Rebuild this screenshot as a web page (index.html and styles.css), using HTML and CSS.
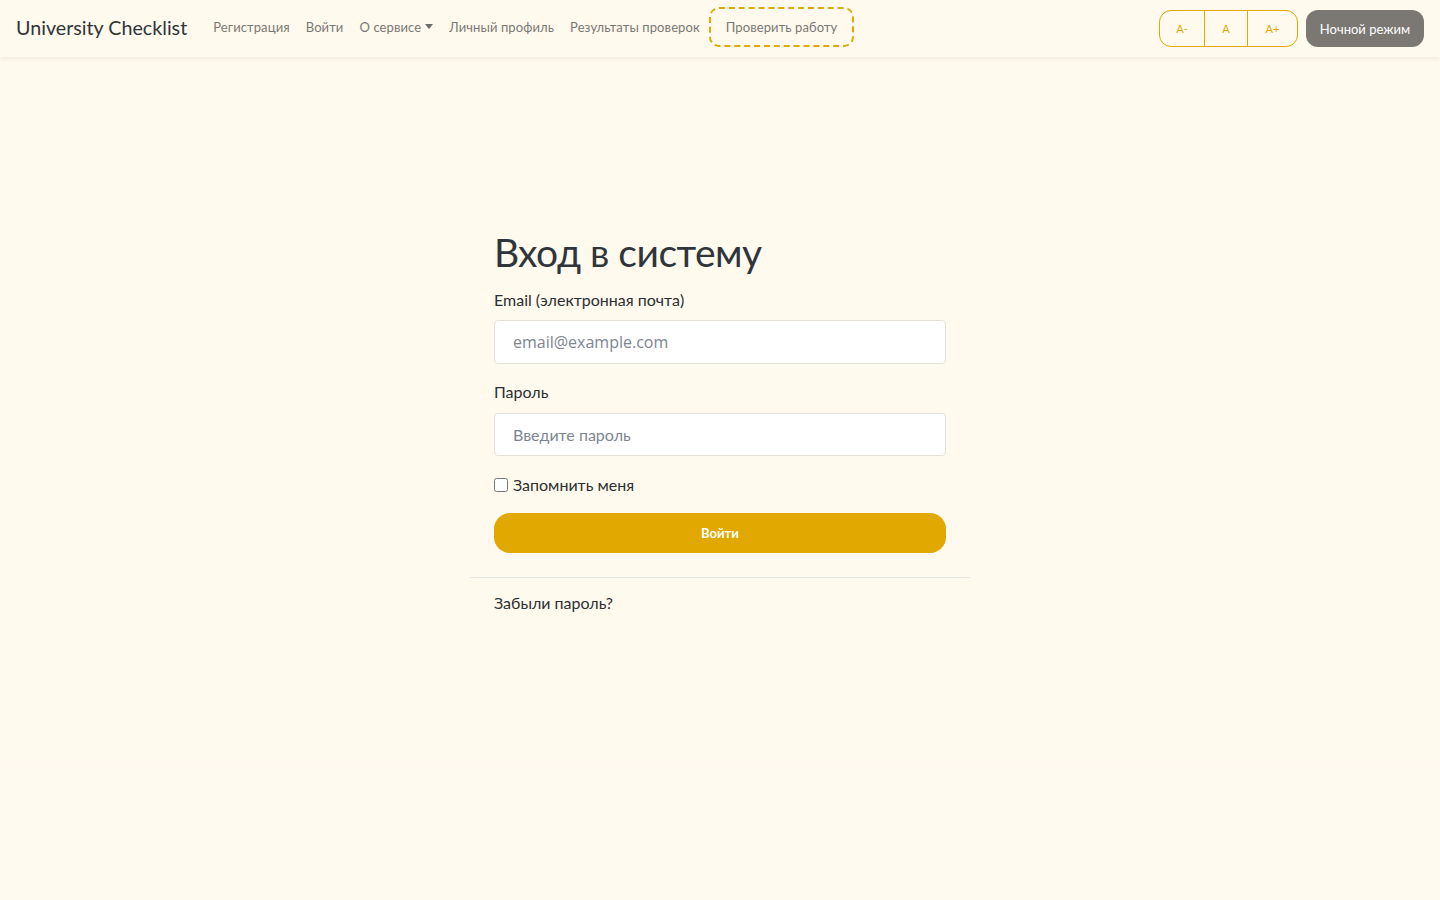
FILE: index.html
```html
<!DOCTYPE html>
<html lang="ru">
<head>
<meta charset="utf-8">
<title>University Checklist</title>
<link rel="stylesheet" href="styles.css">
</head>
<body>
<div class="page">
<header class="navbar">
  <a class="brand" href="#">University Checklist</a>
  <nav class="nav">
    <a href="#">Регистрация</a>
    <a href="#">Войти</a>
    <a href="#" class="dropdown">О сервисе<span class="caret"></span></a>
    <a href="#">Личный профиль</a>
    <a href="#">Результаты проверок</a>
    <a href="#" class="check-btn">Проверить работу</a>
  </nav>
  <div class="tools">
    <div class="size-group">
      <button class="sz sz1">A-</button>
      <button class="sz sz2">A</button>
      <button class="sz sz3">A+</button>
    </div>
    <button class="night">Ночной режим</button>
  </div>
</header>
<main class="main">
  <section class="login">
    <div class="login-body">
      <h1 class="title">Вход в систему</h1>
      <label class="label" for="email">Email (электронная почта)</label>
      <input class="input email" id="email" type="email" placeholder="email@example.com">
      <label class="label" for="pw">Пароль</label>
      <input class="input pw" id="pw" type="password" placeholder="Введите пароль">
      <label class="remember"><input type="checkbox" class="check"><span>Запомнить меня</span></label>
      <button class="submit">Войти</button>
    </div>
    <hr class="sep">
    <div class="login-foot"><a href="#">Забыли пароль?</a></div>
  </section>
</main>
</div>
</body>
</html>
```
FILE: styles.css
```css
html {
  background: #fffaf0;
}
body {
  margin: 0;
  font-family: "Lato", "Noto Sans", sans-serif;
  color: #2b2f33;
}
.page {
  background: #fffaed;
  min-height: 762px;
}
a { text-decoration: none; color: inherit; }

.navbar {
  height: 57px;
  display: flex;
  align-items: center;
  padding: 0 16px 3px;
  box-sizing: border-box;
  background: #fffaed;
  box-shadow: 0 2px 4px rgba(0,0,0,0.06);
}
.brand {
  font-size: 19.7px;
  color: #2f343a;
  margin-right: 18px;
}
.nav {
  display: flex;
  align-items: center;
}
.nav a {
  font-size: 13px;
  letter-spacing: 0.1px;
  color: #7a7874;
  padding: 8px 8px;
}
.caret {
  display: inline-block;
  margin-left: 4px;
  vertical-align: 3px;
  border-top: 5px solid #6d6b68;
  border-left: 4px solid transparent;
  border-right: 4px solid transparent;
}
.nav a.check-btn {
  margin-left: 1px;
  border: 2px dashed #e0a800;
  border-radius: 10px;
  padding: 10px 15px;
  color: #7a7874;
}
.tools {
  margin-left: auto;
  display: flex;
  align-items: center;
  gap: 8px;
  margin-top: 3px;
}
.size-group {
  display: flex;
  border: 1px solid #e0a800;
  border-radius: 12px;
  overflow: hidden;
  height: 37px;
  box-sizing: border-box;
}
.sz {
  background: transparent;
  border: none;
  color: #e0a800;
  font-family: inherit;
  font-size: 11px;
  padding: 0;
}
.sz1 { width: 44px; }
.sz2 { width: 44px; border-left: 1px solid #e0a800; border-right: 1px solid #e0a800; }
.sz3 { width: 49px; }
.night {
  height: 37px;
  width: 118px;
  border: none;
  border-radius: 12px;
  background: #7b7873;
  color: #fff;
  font-family: inherit;
  font-size: 13px;
}

.main {
  display: flex;
  justify-content: center;
  padding-top: 172px;
}
.login {
  width: 500px;
}
.login-body {
  padding: 0 24px;
  display: flex;
  flex-direction: column;
}
.title {
  margin: 0 0 12px;
  font-size: 39px;
  font-weight: 400;
  color: #2f353b;
  line-height: 1.2;
  letter-spacing: -0.5px;
}
.label {
  font-size: 16px;
  color: #2b2f33;
  margin-bottom: 8px;
  line-height: 24px;
}
.input {
  height: 44px;
  box-sizing: border-box;
  border: 1px solid #e6e1d6;
  border-radius: 4px;
  background: #fff;
  padding: 0 18px;
  font-size: 16px;
  margin-bottom: 16px;
  outline: none;
}
.input.email { font-family: "Open Sans", sans-serif; }
.input.pw { font-family: inherit; margin-bottom: 17px; height: 43px; }
.input::placeholder { color: #7e8590; }
.label[for="pw"] { margin-bottom: 9px; }
.remember {
  display: flex;
  align-items: center;
  font-size: 16px;
  line-height: 24px;
  gap: 5px;
  margin-bottom: 16px;
}
.check {
  width: 14px;
  height: 14px;
  margin: 0;
  accent-color: #e0a800;
}
.submit {
  height: 40px;
  border: none;
  border-radius: 16px;
  background: #e0a800;
  color: #fff;
  font-family: inherit;
  font-size: 13px;
  font-weight: 700;
}
.sep {
  margin: 24px 0 15px;
  border: none;
  border-top: 1px solid #e6e5e2;
}
.login-foot {
  padding: 0 24px;
  font-size: 16px;
  color: #2b2f33;
}
```
